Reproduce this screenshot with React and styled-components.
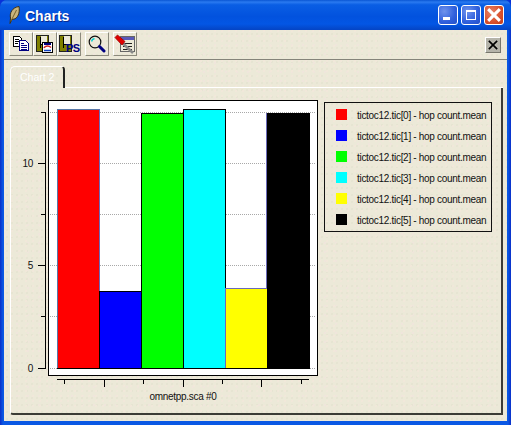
import React from 'react';
import styled, { createGlobalStyle, css } from 'styled-components';

const GlobalStyle = createGlobalStyle`
  html, body {
    margin: 0;
    padding: 0;
    background: #0831d9;
  }
`;

const speckle = css`
  background-color: #ece9d8;
  background-image:
    radial-gradient(circle at 1px 1px, #f1e8da 0.7px, transparent 1px),
    radial-gradient(circle at 3px 4px, #e6e5d2 0.7px, transparent 1px),
    radial-gradient(circle at 2px 6px, #efe6dc 0.7px, transparent 1px);
  background-size: 7px 5px, 5px 7px, 11px 9px;
`;

const Window = styled.div`
  width: 511px;
  height: 425px;
  display: flex;
  flex-direction: column;
  overflow: hidden;
  border-radius: 7px 7px 0 0;
  background: linear-gradient(90deg, #0a2fc8 0, #0a58e4 3px, #0a58e4 508px, #0a2fc8 511px);
`;

const TitleBar = styled.div`
  height: 30px;
  flex: none;
  box-sizing: border-box;
  padding: 0 7px 0 9px;
  display: flex;
  align-items: center;
  background: linear-gradient(180deg, #0a56d4 0%, #2a7af0 7%, #0a5ee4 16%, #0252de 55%, #0356e4 80%, #0444c4 100%);
`;

const TitleText = styled.span`
  flex: 1;
  margin: 2px 0 0 5px;
  font: bold 14px "Liberation Sans", Arial, sans-serif;
  color: #fff;
  text-shadow: 1px 1px 0 #0a2a90;
`;

const WinButton = styled.div`
  width: 20px;
  height: 20px;
  box-sizing: border-box;
  margin-left: 3px;
  border: 1px solid #fff;
  border-radius: 3px;
  display: flex;
  align-items: center;
  justify-content: center;
  background: ${p => p.$close
    ? 'radial-gradient(circle at 35% 35%, #e8846a, #d9502c 60%, #c23a16)'
    : 'radial-gradient(circle at 30% 30%, #6f93ec, #2f5fdc 60%, #2450c8)'};
`;

const Body = styled.div`
  flex: 1;
  margin: 0 4px 4px;
  display: flex;
  flex-direction: column;
  ${speckle}
`;

const Toolbar = styled.div`
  height: 30px;
  flex: none;
  box-sizing: border-box;
  padding: 2px 6px 0 5px;
  display: flex;
  align-items: flex-start;
  border-bottom: 1px solid #85847a;
`;

const ToolButton = styled.div`
  width: 24px;
  height: 24px;
  box-sizing: border-box;
  flex: none;
  margin-left: ${p => p.$gap || 0}px;
  border: 1px solid;
  border-color: #fff #8c8a7c #8c8a7c #fff;
  display: flex;
  align-items: center;
  justify-content: center;
`;

const CloseBox = styled.div`
  width: 16px;
  height: 16px;
  box-sizing: border-box;
  margin-top: 5px;
  margin-left: auto;
  border: 1px solid;
  border-color: #fff #77766c #77766c #fff;
  background: #b5b4aa;
  display: flex;
  align-items: center;
  justify-content: center;
`;

const Tabs = styled.div`
  flex: 1;
  margin: 6px 4px 6px 6px;
  display: flex;
  flex-direction: column;
`;

const TabStrip = styled.div`
  height: 22px;
  flex: none;
  display: flex;
`;

const Tab = styled.div`
  width: 55px;
  box-sizing: border-box;
  padding: 4px 0 0 9px;
  border-top: 1px solid #fff;
  border-left: 1px solid #fff;
  border-right: 2px solid #222;
  border-radius: 5px 4px 0 0;
  font: 10.5px "Liberation Sans", Arial, sans-serif;
  color: #fff;
`;

const TabRest = styled.div`
  flex: 1;
  border-bottom: 1px solid #fff;
`;

const Panel = styled.div`
  flex: 1;
  display: flex;
  align-items: flex-start;
  border-left: 1px solid #fff;
  border-right: 2px solid #3c3c36;
  border-bottom: 2px solid #3c3c36;
  border-bottom-left-radius: 3px;
`;

const ChartSvg = styled.svg`
  display: block;
  flex: none;
  width: 309px;
  height: 312px;
  margin-top: 7px;
  font-family: "Liberation Sans", Arial, sans-serif;
  font-size: 10px;
  letter-spacing: -0.3px;
`;

const Legend = styled.div`
  box-sizing: border-box;
  width: 168px;
  height: 130px;
  margin: 14px 0 0 4px;
  border: 1px solid #111;
  padding: 5px 0 0 11px;
  display: flex;
  flex-direction: column;
  gap: 9px;
`;

const LegendRow = styled.div`
  height: 12px;
  display: flex;
  align-items: center;
  gap: 10px;
`;

const Swatch = styled.div`
  width: 11px;
  height: 11px;
  flex: none;
  background: ${p => p.$color};
`;

const LegendLabel = styled.span`
  font: 10px "Liberation Sans", Arial, sans-serif;
  letter-spacing: -0.3px;
  color: #111;
  white-space: nowrap;
  position: relative;
  top: 1px;
`;

const series = [
  { color: '#ff0000', top: 109, edge: '#5878a8' },
  { color: '#0000ff', top: 291, edge: '#000' },
  { color: '#00ff00', top: 113, edge: '#000' },
  { color: '#00ffff', top: 109, edge: '#000' },
  { color: '#ffff00', top: 288, edge: '#6a6ab8' },
  { color: '#000000', top: 113, edge: '#000' },
];

const gridY = [112, 163, 214, 265, 316, 368];
const yLabels = [{ y: 163, t: '10' }, { y: 265, t: '5' }, { y: 368, t: '0' }];
const xTicks = [64, 104, 143, 183, 222, 261, 301];

function Chart() {
  return (
    <ChartSvg viewBox="11 95 309 312" shapeRendering="crispEdges">
      <rect x="48.5" y="100.5" width="269" height="275" fill="#fff" stroke="#000" strokeWidth="1.5" />
      {gridY.map(y => (
        <line key={y} x1="50" x2="316" y1={y + 0.5} y2={y + 0.5} stroke="#a8a8a8" strokeDasharray="1 1" />
      ))}
      {series.map((s, i) => (
        <rect
          key={s.color}
          x={57 + i * 42 + 0.5}
          y={s.top + 0.5}
          width={42}
          height={368 - s.top}
          fill={s.color}
          stroke={s.edge}
        />
      ))}
      <line x1="99.5" x2="99.5" y1="109" y2="291" stroke="#6a6ab8" />
      <line x1="266.5" x2="266.5" y1="113" y2="288" stroke="#6a6ab8" />
      <line x1="57" x2="309" y1="368.5" y2="368.5" stroke="#000" />

      <line x1="45.5" x2="45.5" y1="112" y2="369" stroke="#000" />
      {gridY.map((y, i) => (
        <line key={y} x1={i % 2 ? 38 : 41} x2="45" y1={y + 0.5} y2={y + 0.5} stroke="#000" />
      ))}
      {yLabels.map(l => (
        <text key={l.t} x="33" y={l.y + 4} textAnchor="end" fill="#111">{l.t}</text>
      ))}

      <line x1="57" x2="309" y1="379.5" y2="379.5" stroke="#000" />
      {xTicks.map((x, i) => (
        <line key={x} x1={x + 0.5} x2={x + 0.5} y1="380" y2={i % 2 ? 387 : 384} stroke="#000" />
      ))}
      <text x="183" y="400" textAnchor="middle" fill="#111">omnetpp.sca #0</text>
    </ChartSvg>
  );
}

const Feather = () => (
  <svg width="11" height="18" viewBox="0 0 11 18">
    <path d="M1 17.5 L1.5 12 C0.5 7 3 1.5 10 0.5 C10.8 5 10 10.5 6 12.8 L3 13.5 Z" fill="#c9b47c" stroke="#3f3216" strokeWidth="1" />
    <path d="M2 15 L7.5 4" stroke="#75622c" strokeWidth="1" fill="none" />
  </svg>
);

const CopyIcon = () => (
  <svg width="16" height="16" viewBox="0 0 16 16" shapeRendering="crispEdges">
    <path d="M0.5 0.5H6.5L8.5 2.5V10.5H0.5Z" fill="#fff" stroke="#000" />
    <path d="M2 3h4M2 5h4M2 7h3" stroke="#000" />
    <path d="M6.5 4.5H12.5L15.5 7.5V14.5H6.5Z" fill="#fff" stroke="#000080" />
    <path d="M8 7h3M8 9h6M8 11h6M8 13h6" stroke="#000080" />
  </svg>
);

// the olive floppy shared by both save buttons
const Floppy = () => (
  <g shapeRendering="crispEdges">
    <path d="M0.5 0.5H12.5V16.5H0.5Z" fill="#808000" stroke="#222" />
    <rect x="4" y="2" width="1" height="11" fill="#000" />
    <rect x="5" y="1" width="6" height="8" fill="#ece9d8" />
    <rect x="5" y="9" width="7" height="1" fill="#000" />
  </g>
);

const SaveIcon = () => (
  <svg width="18" height="18" viewBox="0 0 18 18">
    <Floppy />
    <g shapeRendering="crispEdges">
      <rect x="6.5" y="7.5" width="10" height="10" fill="#fff" stroke="#000" />
      <rect x="8" y="8" width="7" height="2" fill="#000080" />
    </g>
    <path d="M8 13 C9 10.5 13 10.5 15 12.5" stroke="#d02020" strokeWidth="1.5" fill="none" />
    <path d="M8 15.5 H15" stroke="#1040c0" strokeWidth="1.5" />
  </svg>
);

const PsIcon = () => (
  <svg width="21" height="19" viewBox="0 0 21 19">
    <Floppy />
    <text x="7" y="17" fontFamily="Liberation Sans, Arial, sans-serif" fontWeight="bold" fontSize="11" letterSpacing="-0.5" fill="#000080">PS</text>
  </svg>
);

const MagnifierIcon = () => (
  <svg width="18" height="18" viewBox="0 0 18 18">
    <circle cx="7" cy="7" r="5.8" fill="#ece9d8" stroke="#111" strokeWidth="1.2" />
    <path d="M3.8 6.5 C3.8 5 5 3.8 6.5 3.8" stroke="#00d0d0" strokeWidth="1.5" fill="none" />
    <path d="M11.5 11.5 L16 16" stroke="#000080" strokeWidth="3" strokeLinecap="round" />
  </svg>
);

const ConfigIcon = () => (
  <svg width="22" height="20" viewBox="0 0 22 20">
    <g shapeRendering="crispEdges">
      <rect x="6.5" y="2.5" width="14" height="15" fill="#ece9d8" stroke="#666" />
      <rect x="7" y="3" width="13" height="3" fill="#5a5ab8" />
      <path d="M9 9h9M9 12h3M14 12h4M9 15h9" stroke="#222" />
    </g>
    <path d="M9 9.5 L19 19" stroke="#8a8a8a" strokeWidth="2.6" />
    <path d="M1 3.5 L3.5 1 L11 7.5 L8 11 Z" fill="#e00000" stroke="#a00000" strokeWidth="0.8" />
  </svg>
);

const Cross = ({ size, width, color }) => (
  <svg width={size} height={size} viewBox="0 0 12 12">
    <path d="M1 1 L11 11 M11 1 L1 11" stroke={color} strokeWidth={width} />
  </svg>
);

export default function App() {
  return (
    <Window>
      <GlobalStyle />
      <TitleBar>
        <Feather />
        <TitleText>Charts</TitleText>
        <WinButton>
          <svg width="12" height="12" viewBox="0 0 12 12" shapeRendering="crispEdges">
            <rect x="1" y="8" width="7" height="3" fill="#fff" />
          </svg>
        </WinButton>
        <WinButton>
          <svg width="12" height="12" viewBox="0 0 12 12" shapeRendering="crispEdges">
            <path d="M1 1.5H11M1.5 1V11M10.5 1V11M1 10.5H11" stroke="#fff" fill="none" />
            <rect x="1" y="1" width="10" height="2" fill="#fff" />
          </svg>
        </WinButton>
        <WinButton $close>
          <Cross size={14} width={2.6} color="#fff" />
        </WinButton>
      </TitleBar>
      <Body>
        <Toolbar>
          <ToolButton><CopyIcon /></ToolButton>
          <ToolButton><SaveIcon /></ToolButton>
          <ToolButton><PsIcon /></ToolButton>
          <ToolButton $gap={4}><MagnifierIcon /></ToolButton>
          <ToolButton $gap={4}><ConfigIcon /></ToolButton>
          <CloseBox><Cross size={10} width={2} color="#000" /></CloseBox>
        </Toolbar>
        <Tabs>
          <TabStrip>
            <Tab>Chart 2</Tab>
            <TabRest />
          </TabStrip>
          <Panel>
            <Chart />
            <Legend>
              {series.map((s, i) => (
                <LegendRow key={s.color}>
                  <Swatch $color={s.color} />
                  <LegendLabel>{`tictoc12.tic[${i}] - hop count.mean`}</LegendLabel>
                </LegendRow>
              ))}
            </Legend>
          </Panel>
        </Tabs>
      </Body>
    </Window>
  );
}
